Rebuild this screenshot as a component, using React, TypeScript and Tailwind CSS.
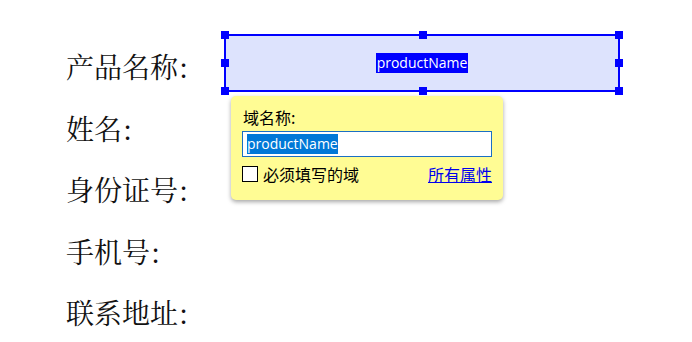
export default function App() {
  const labels = ["产品名称", "姓名", "身份证号", "手机号", "联系地址"];
  return (
    <div className="relative w-[692px] h-[342px] bg-white overflow-hidden">
      <div
        className="flex flex-col pl-[66px] pt-[36px] text-[28px] text-[#111]"
        style={{ fontFamily: '"Noto Serif CJK SC", "Noto Sans CJK SC", serif' }}
      >
        {labels.map((l) => (
          <div key={l} className="h-[61.5px] leading-[61.5px] flex items-center">
            <span>{l}</span>
            <span className="ml-[1px]">:</span>
          </div>
        ))}
      </div>

      {/* selected field */}
      <div className="absolute left-[224px] top-[34px] w-[396px] h-[58px] border-2 border-[#0000ff] bg-[#dde3fd] flex items-center justify-center">
        <span
          className="bg-[#0000ff] text-white text-[14px] leading-[20px] px-[1px]"
          style={{ fontFamily: '"Open Sans", "Noto Sans", sans-serif' }}
        >
          productName
        </span>
        <div className="absolute left-[-5px] top-[-5px] w-[8px] h-[8px] bg-[#0000ff]" />
        <div className="absolute left-[193px] top-[-5px] w-[8px] h-[8px] bg-[#0000ff]" />
        <div className="absolute right-[-5px] top-[-5px] w-[8px] h-[8px] bg-[#0000ff]" />
        <div className="absolute left-[-5px] top-[23px] w-[8px] h-[8px] bg-[#0000ff]" />
        <div className="absolute right-[-5px] top-[23px] w-[8px] h-[8px] bg-[#0000ff]" />
        <div className="absolute left-[-5px] bottom-[-5px] w-[8px] h-[8px] bg-[#0000ff]" />
        <div className="absolute left-[193px] bottom-[-5px] w-[8px] h-[8px] bg-[#0000ff]" />
        <div className="absolute right-[-5px] bottom-[-5px] w-[8px] h-[8px] bg-[#0000ff]" />
      </div>

      {/* popup */}
      <div
        className="absolute left-[231px] top-[96px] w-[272px] h-[104px] bg-[#fffc94] rounded-[5px] shadow-[0_2px_4px_rgba(0,0,0,0.35)] px-[11px] pt-[10px] flex flex-col text-[16px] text-black"
        style={{ fontFamily: '"Noto Sans CJK SC", "Noto Sans", sans-serif' }}
      >
        <div className="leading-[22px] h-[22px] pl-[1px]">域名称:</div>
        <div className="mt-[3px] w-[250px] h-[26px] border border-[#1a6fc4] bg-white flex items-center pl-[4px]">
          <span
            className="bg-[#0078d7] text-white text-[14px] leading-[20px]"
            style={{ fontFamily: '"Open Sans", "Noto Sans", sans-serif' }}
          >
            productName
          </span>
        </div>
        <div className="mt-[7px] w-[250px] flex items-center justify-between leading-[20px]">
          <div className="flex items-center">
            <div className="w-[16px] h-[16px] border border-black bg-white" />
            <span className="ml-[5px]">必须填写的域</span>
          </div>
          <span className="text-[#0000ee] underline">所有属性</span>
        </div>
      </div>
    </div>
  );
}
